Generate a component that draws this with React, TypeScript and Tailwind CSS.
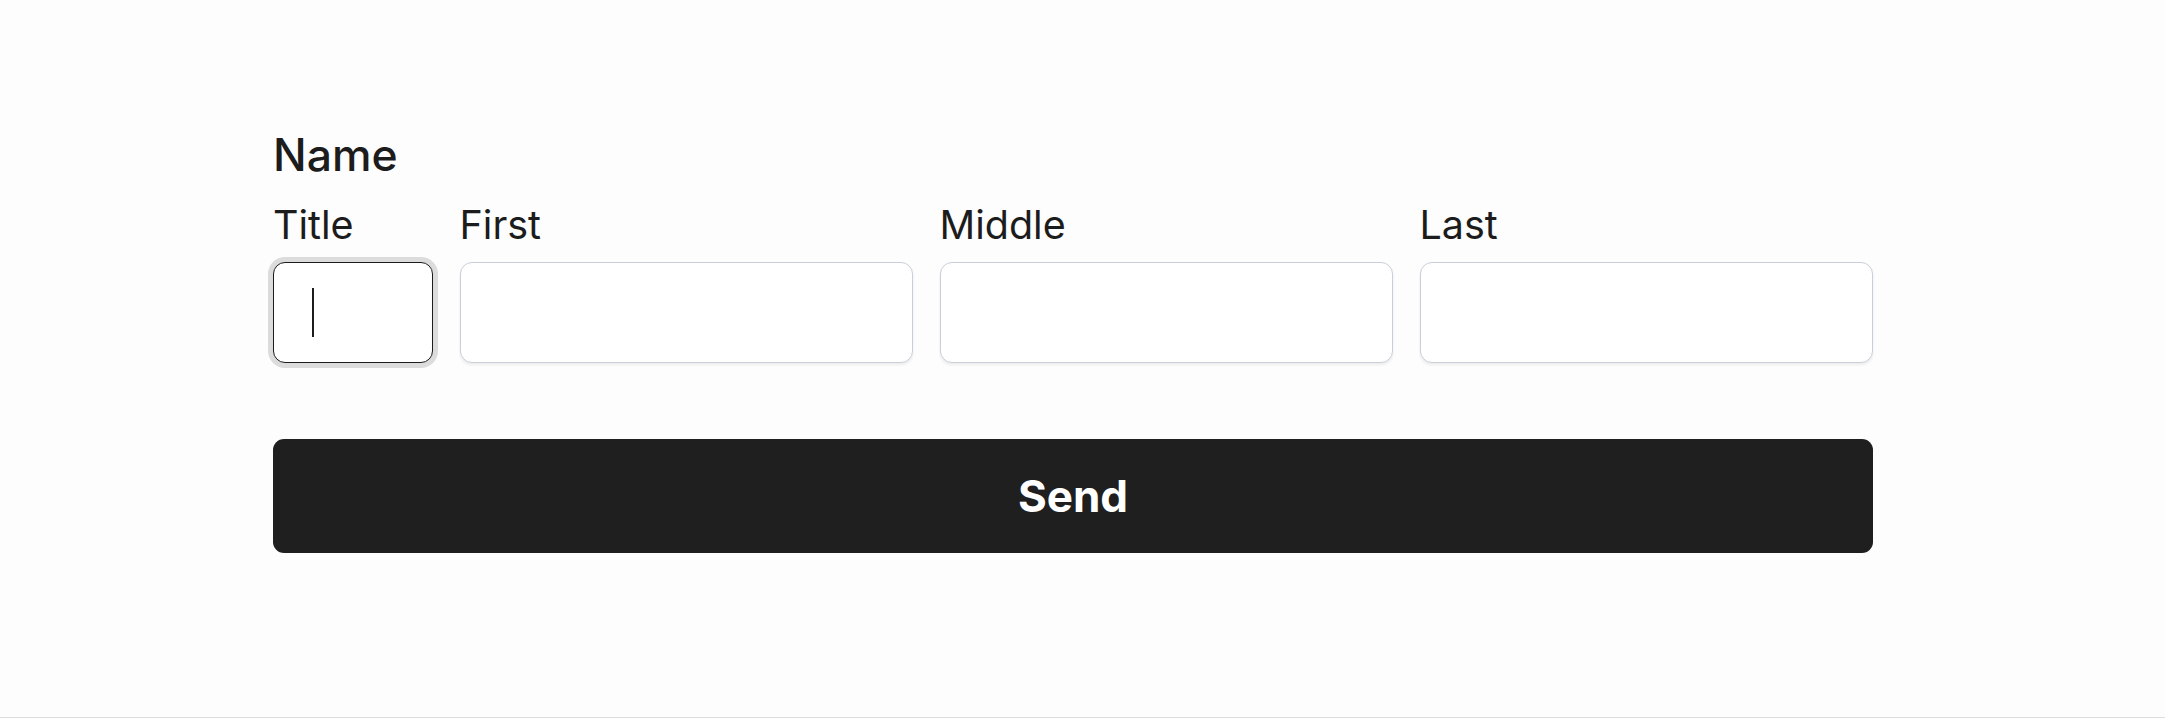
import React from "react";

const font = { fontFamily: "Inter, 'Liberation Sans', sans-serif" };

const inputClass =
  "h-[101px] w-full rounded-[12px] border-[1.5px] border-[#c8cfda] bg-white px-[38px] text-[39px] text-[#1c1c1c] shadow-[0_2px_3px_rgba(0,0,0,0.07)] outline-none focus:border-[#1c1c1c] focus:ring-[5px] focus:ring-[#dcdcdc]";

const fields = [
  { id: "title", label: "Title" },
  { id: "first", label: "First" },
  { id: "middle", label: "Middle" },
  { id: "last", label: "Last" },
];

export default function App() {
  return (
    <div
      className="h-[718px] w-full border-b border-[#dcdcdc] bg-[#fdfdfd] text-[#1c1c1c]"
      style={font}
    >
      <form
        className="ml-[273px] flex w-[1600px] flex-col pt-[129px]"
        onSubmit={(e) => e.preventDefault()}
      >
        <h2 className="text-[44.5px] font-medium leading-[52px]">Name</h2>
        <div className="mt-[21px] grid grid-cols-[160px_1fr_1fr_1fr] gap-x-[26.5px]">
          {fields.map((f, i) => (
            <div key={f.id} className="flex flex-col">
              <label
                htmlFor={f.id}
                className="mb-[14px] text-[39.5px] leading-[46px]"
              >
                {f.label}
              </label>
              <div className="relative">
                <input
                  id={f.id}
                  type="text"
                  autoFocus={i === 0}
                  className={`${inputClass} ${i === 0 ? "caret-transparent" : "caret-[#1c1c1c]"}`}
                />
                {i === 0 && (
                  <span className="pointer-events-none absolute left-[39px] top-[26px] h-[49px] w-[2px] bg-[#1c1c1c]" />
                )}
              </div>
            </div>
          ))}
        </div>
        <button
          type="submit"
          className="mt-[76px] h-[114px] w-full rounded-[11px] bg-[#1f1f1f] text-[44px] font-bold text-white"
        >
          Send
        </button>
      </form>
    </div>
  );
}
